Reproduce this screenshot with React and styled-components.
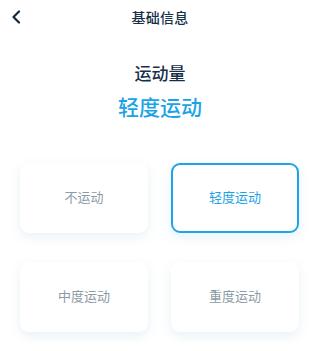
import React, { useState } from "react";
import styled, { createGlobalStyle } from "styled-components";

const Global = createGlobalStyle`
  html, body {
    margin: 0;
    padding: 0;
    background: #fff;
  }
  body {
    font-family: "Noto Sans CJK SC", "Noto Sans", sans-serif;
  }
`;

const levels = ["不运动", "轻度运动", "中度运动", "重度运动"];

const App = () => {
  const [selected, setSelected] = useState(1);

  return (
    <Page>
      <Global />
      <Header>
        <Back aria-label="返回">
          <svg width="10" height="14" viewBox="0 0 10 14">
            <path
              d="M8 1.5 L2.5 7 L8 12.5"
              fill="none"
              stroke="#14293d"
              strokeWidth="2.2"
              strokeLinecap="round"
              strokeLinejoin="round"
            />
          </svg>
        </Back>
        <Title>基础信息</Title>
      </Header>

      <Label>运动量</Label>
      <Value>{levels[selected]}</Value>

      <Grid>
        {levels.map((name, i) => (
          <Card key={name} $active={i === selected} onClick={() => setSelected(i)}>
            {name}
          </Card>
        ))}
      </Grid>
    </Page>
  );
};

const Page = styled.div`
  width: 320px;
  height: 351px;
  overflow: hidden;
  background: #fff;
`;

const Header = styled.div`
  position: relative;
  height: 33px;
  display: flex;
  align-items: center;
  justify-content: center;
`;

const Back = styled.button`
  position: absolute;
  left: 8px;
  top: 8px;
  width: 16px;
  height: 18px;
  padding: 0;
  border: 0;
  background: none;
  display: flex;
  align-items: center;
  justify-content: center;
`;

const Title = styled.div`
  font-size: 14px;
  font-weight: 500;
  color: #17304a;
  letter-spacing: 0.3px;
`;

const Label = styled.div`
  margin-top: 28px;
  text-align: center;
  font-size: 17px;
  font-weight: 500;
  line-height: 24px;
  color: #17304a;
`;

const Value = styled.div`
  margin-top: 7px;
  text-align: center;
  font-size: 21px;
  font-weight: 500;
  line-height: 28px;
  color: #1ba3e8;
`;

const Grid = styled.div`
  margin-top: 43px;
  padding: 0 21px 0 20px;
  display: grid;
  grid-template-columns: 1fr 1fr;
  column-gap: 23px;
  row-gap: 29px;
`;

const Card = styled.div`
  box-sizing: border-box;
  height: 70px;
  padding-bottom: 3px;
  border-radius: 9px;
  background: #fff;
  border: 2px solid ${(p) => (p.$active ? "#1ea5e9" : "transparent")};
  box-shadow: 0 4px 12px rgba(40, 120, 170, 0.1);
  display: flex;
  align-items: center;
  justify-content: center;
  font-size: 13px;
  color: ${(p) => (p.$active ? "#1ba3e8" : "#8c9aa6")};
  cursor: pointer;
`;

export default App;
